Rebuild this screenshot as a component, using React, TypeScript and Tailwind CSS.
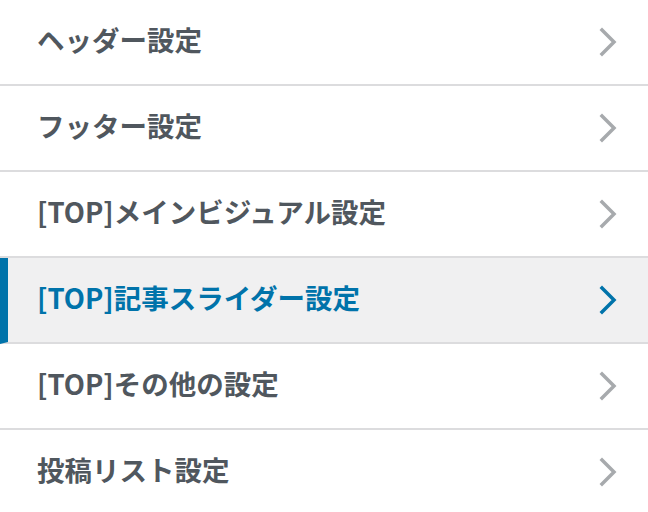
const sections = [
  { id: "header", title: "ヘッダー設定" },
  { id: "footer", title: "フッター設定" },
  { id: "top-mv", title: "[TOP]メインビジュアル設定" },
  { id: "top-slider", title: "[TOP]記事スライダー設定", active: true },
  { id: "top-other", title: "[TOP]その他の設定" },
  { id: "post-list", title: "投稿リスト設定" },
];

function Chevron({ active }: { active?: boolean }) {
  return (
    <svg width="24" height="32" viewBox="0 0 24 32" fill="none" className="shrink-0">
      <path
        d="M5 4 L17 16 L5 28"
        stroke={active ? "#0073aa" : "#a7aaad"}
        strokeWidth="3.5"
        strokeLinecap="square"
      />
    </svg>
  );
}

export default function App() {
  return (
    <div
      className="w-[648px] h-[512px] overflow-hidden bg-white"
      style={{ fontFamily: '"Noto Sans CJK JP", "Noto Sans", sans-serif' }}
    >
      <ul>
        {sections.map((s) => (
          <li
            key={s.id}
            className={
              s.active
                ? "h-[86px] flex items-center justify-between border-b-2 border-[#dcdcde] bg-[#f0f0f1] border-l-[8px] border-l-[#0073aa] pl-[29px] pr-[27px]"
                : "h-[86px] flex items-center justify-between border-b-2 border-[#dcdcde] bg-white pl-[37px] pr-[27px]"
            }
          >
            <span
              className={
                s.active
                  ? "text-[27.5px] font-semibold leading-none pb-[4px] text-[#0073aa]"
                  : "text-[27.5px] font-semibold leading-none pb-[4px] text-[#50575e]"
              }
            >
              {s.title}
            </span>
            <Chevron active={s.active} />
          </li>
        ))}
      </ul>
    </div>
  );
}
